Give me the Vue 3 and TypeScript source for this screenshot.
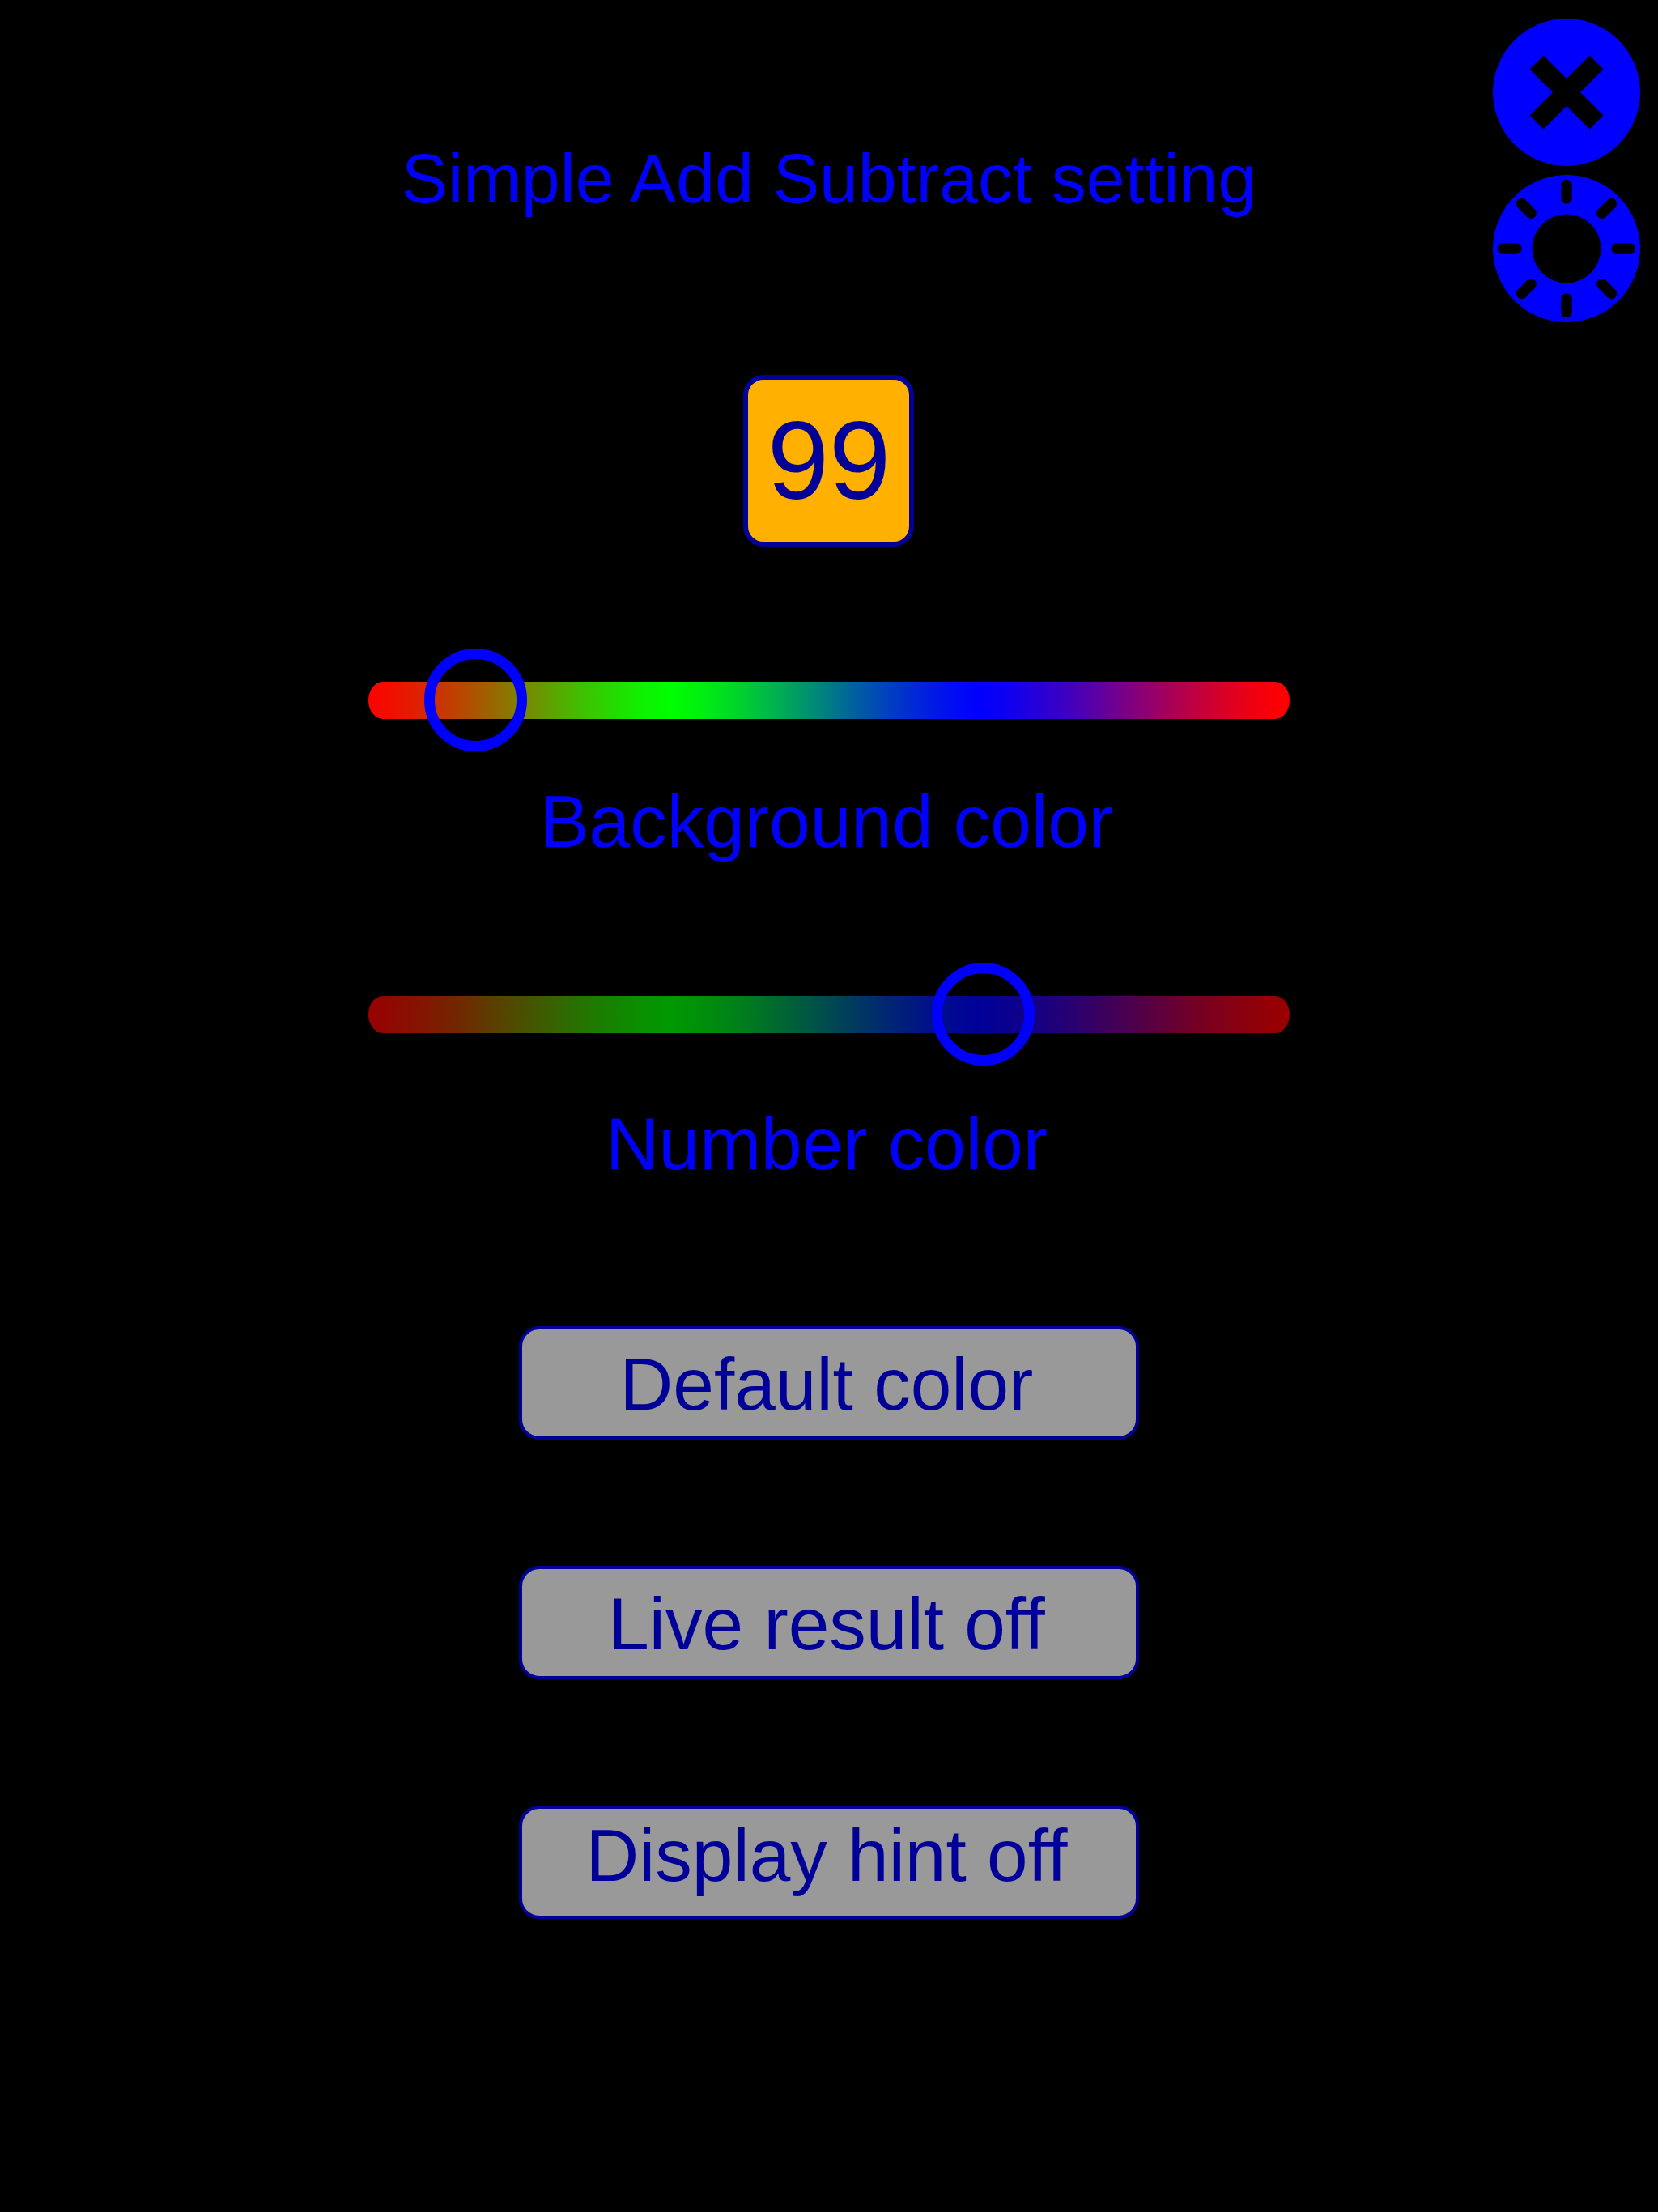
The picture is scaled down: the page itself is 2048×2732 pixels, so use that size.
<script setup lang="ts">
import { ref } from 'vue'

const backgroundPosition = ref(68)
const numberPosition = ref(688)
const liveResult = ref(false)
const displayHint = ref(false)

const rayAngles = [0, 45, 90, 135, 180, 225, 270, 315]

// Eases each hue into the next, so that the pure colours hold a little longer.
function ease(t: number): number {
  return (t + t * t * (3 - 2 * t)) / 2
}

// Red, green, blue and red again, at equal distances along the track.
function hueTrack(peak: number): string {
  const steps = 10
  const stops: string[] = []
  for (let i = 0; i <= steps * 3; i++) {
    const segment = Math.min(Math.floor(i / steps), 2)
    const mix = ease(i / steps - segment)
    const rgb = [0, 0, 0]
    rgb[segment] = Math.round(peak * (1 - mix))
    rgb[(segment + 1) % 3] = Math.round(peak * mix)
    const position = (i / (steps * 3)) * 100 - 0.5
    stops.push(`rgb(${rgb.join(', ')}) ${position.toFixed(1)}%`)
  }
  return `linear-gradient(90deg, ${stops.join(', ')})`
}

const brightTrack = hueTrack(255)
const darkTrack = hueTrack(153)

function resetColors(): void {
  backgroundPosition.value = 68
  numberPosition.value = 688
}
</script>

<template>
  <div class="page">
    <main class="settings">
      <h1 class="title">Simple Add Subtract setting</h1>

      <output class="tile" for="background-color number-color">99</output>

      <section class="picker picker-background">
        <input
          id="background-color"
          v-model.number="backgroundPosition"
          class="slider"
          :style="{ '--track': brightTrack }"
          type="range"
          min="0"
          max="1000"
        />
        <label class="caption" for="background-color">Background color</label>
      </section>

      <section class="picker picker-number">
        <input
          id="number-color"
          v-model.number="numberPosition"
          class="slider"
          :style="{ '--track': darkTrack }"
          type="range"
          min="0"
          max="1000"
        />
        <label class="caption" for="number-color">Number color</label>
      </section>

      <div class="actions">
        <button class="action" type="button" @click="resetColors">Default color</button>
        <button class="action" type="button" @click="liveResult = !liveResult">
          Live result {{ liveResult ? 'on' : 'off' }}
        </button>
        <button class="action action-hint" type="button" @click="displayHint = !displayHint">
          Display hint {{ displayHint ? 'on' : 'off' }}
        </button>
      </div>
    </main>

    <nav class="tools">
      <button class="tool" type="button" aria-label="Close">
        <svg viewBox="-91 -91 182 182" aria-hidden="true">
          <circle r="91" fill="#0000ff" />
          <path d="M-37 -37L37 37M37 -37L-37 37" stroke="#000" stroke-width="24" />
        </svg>
      </button>
      <button class="tool" type="button" aria-label="Brightness">
        <svg viewBox="-91 -91 182 182" aria-hidden="true">
          <circle r="91" fill="#0000ff" />
          <circle r="42.5" fill="#000" />
          <path
            v-for="angle in rayAngles"
            :key="angle"
            d="M0 -78.5V-62"
            :transform="`rotate(${angle})`"
            stroke="#000"
            stroke-width="13.5"
            stroke-linecap="round"
          />
        </svg>
      </button>
    </nav>
  </div>
</template>

<style>
body {
  margin: 0;
  background: #000;
}
</style>

<style scoped>
.page {
  display: grid;
  grid-template-columns: 2fr 5fr 2fr;
  min-height: 100vh;
  background: #000;
  color: #0000ff;
  font-family: "Liberation Sans", Arial, sans-serif;
}

.settings {
  grid-column: 2;
  display: flex;
  flex-direction: column;
  align-items: center;
  padding: 170px 0;
}

.title {
  margin: 0;
  font-size: 86px;
  line-height: 100px;
  font-weight: 400;
  white-space: nowrap;
}

.tile {
  box-sizing: border-box;
  width: 211px;
  height: 212px;
  margin-top: 193px;
  border: 6px solid #000099;
  border-radius: 25px;
  background: #ffb000;
  color: #000099;
  font-size: 137px;
  line-height: 200px;
  display: flex;
  align-items: center;
  justify-content: center;
}

.picker {
  width: 100%;
  display: flex;
  flex-direction: column;
  align-items: center;
}

.picker-background {
  margin-top: 126px;
  gap: 34px;
}

.picker-number {
  margin-top: 122px;
  gap: 44px;
}

.caption {
  padding-right: 6px;
  font-size: 91px;
  line-height: 104px;
  white-space: nowrap;
}

.slider {
  appearance: none;
  width: 100%;
  height: 128px;
  margin: 0;
  background: transparent;
}

.slider::-webkit-slider-runnable-track {
  height: 46px;
  border-radius: 18px / 23px;
  background: var(--track);
}

.slider::-webkit-slider-thumb {
  appearance: none;
  box-sizing: border-box;
  width: 127px;
  height: 127px;
  margin-top: -41px;
  border: 13px solid #0000ff;
  border-radius: 50%;
  background: transparent;
}

.actions {
  width: 67.3%;
  margin-top: 173px;
  display: flex;
  flex-direction: column;
  gap: 156px;
}

.action {
  box-sizing: border-box;
  height: 140px;
  padding: 4px 6px 0 0;
  border: 4px solid #000099;
  border-radius: 25px;
  background: #999999;
  color: #000099;
  font-family: inherit;
  font-size: 91px;
  line-height: 104px;
  white-space: nowrap;
}

/* The descenders of this label hang lower, so it sits higher in its box. */
.action-hint {
  padding: 0 6px 16px 0;
}

.tools {
  grid-column: 3;
  display: flex;
  flex-direction: column;
  align-items: flex-end;
  gap: 11px;
  padding: 23px 22px 0 0;
}

.tool {
  width: 182px;
  height: 182px;
  padding: 0;
  border: 0;
  border-radius: 50%;
  background: transparent;
}

.tool svg {
  display: block;
  width: 100%;
  height: 100%;
}
</style>
